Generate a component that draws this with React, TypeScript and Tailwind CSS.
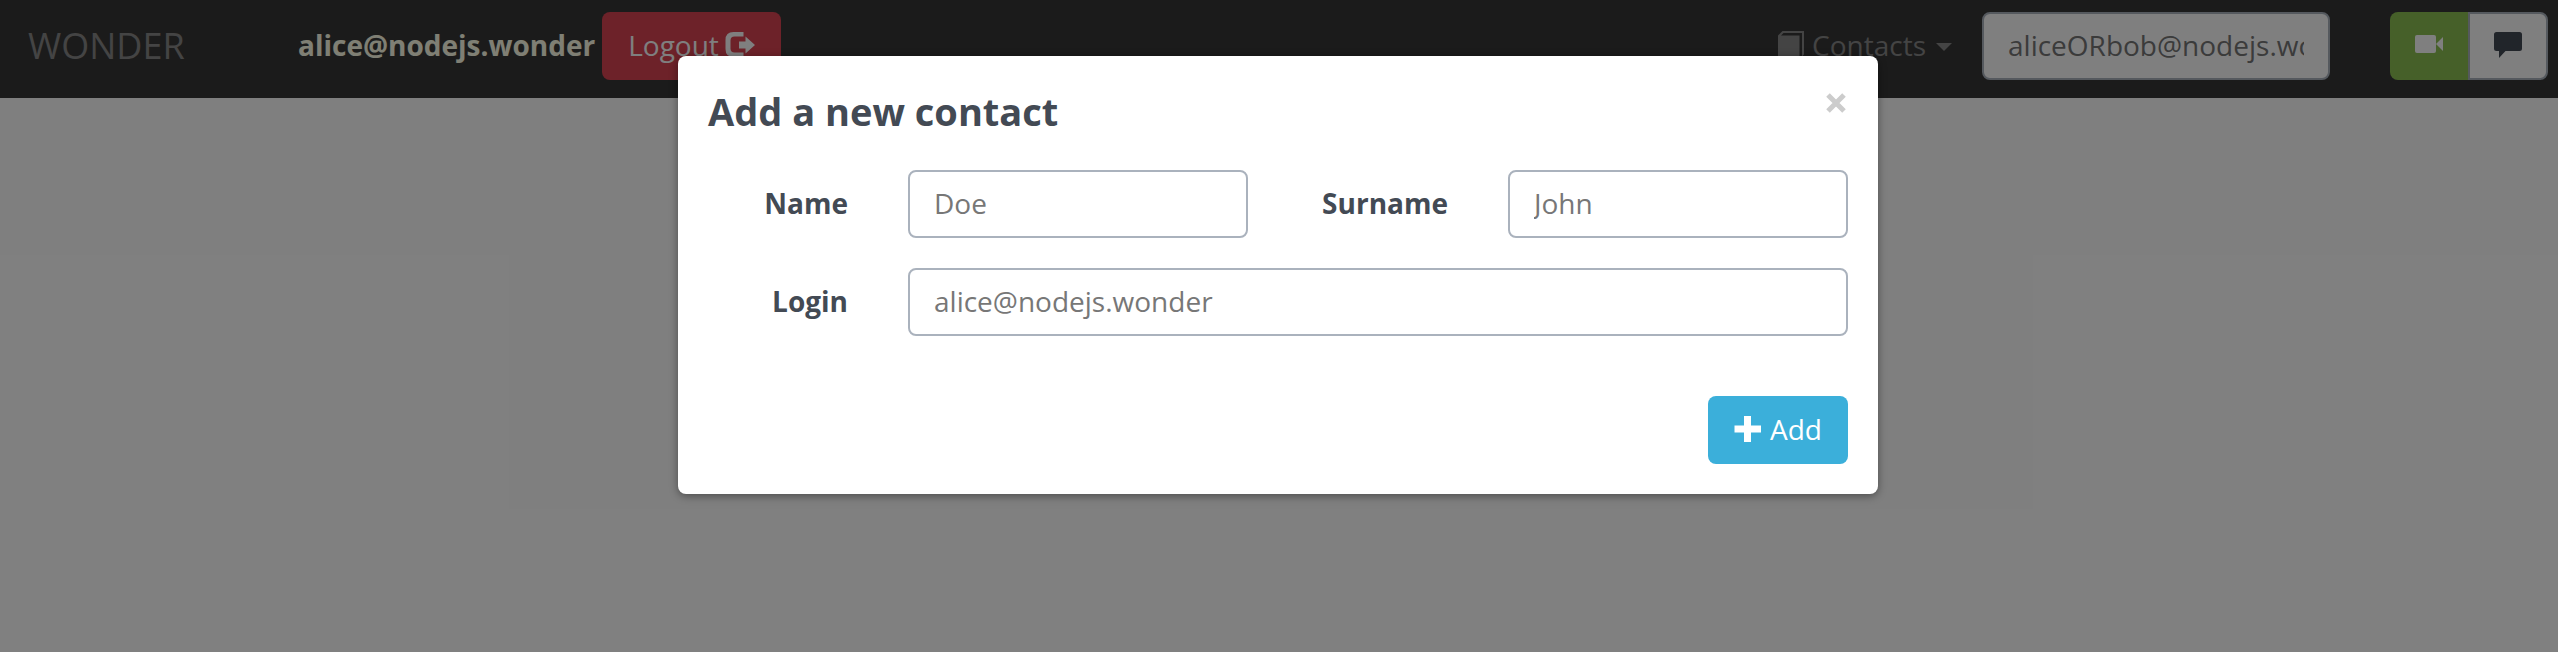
import type { ReactNode } from "react";

const field =
  "h-[68px] w-full min-w-0 rounded-lg border-2 border-[#aab2bd] bg-white px-6 pb-0.5 text-[28px] leading-10 outline-none placeholder:text-[#777777]";
const label = "w-[200px] shrink-0 px-[30px] pb-0.5 text-right font-bold";

function Icon({ children, viewBox = "0 0 28 28", className = "size-7" }: { children: ReactNode; viewBox?: string; className?: string }) {
  return (
    <svg viewBox={viewBox} className={`shrink-0 ${className}`} fill="currentColor" aria-hidden="true">
      {children}
    </svg>
  );
}

function Navbar() {
  return (
    <nav className="flex h-[98px] items-start bg-[#373737] pt-3 pr-[10px] pl-[28px]">
      <a href="#" className="flex h-[68px] w-[270px] shrink-0 items-center text-[36px] text-[#888888]">
        WONDER
      </a>
      <div className="flex flex-1 items-center gap-[7px]">
        <strong className="pb-0.5 font-bold text-[#ffffe8]">alice@nodejs.wonder</strong>
        <button type="button" className="flex h-[68px] items-center gap-1.5 rounded-lg bg-[#da4453] px-[26px] pb-0.5 text-white">
          Logout
          <Icon viewBox="0 0 30 28" className="h-7 w-[30px]">
            <path d="M18.500 1H8.500Q0.500 1 0.500 9v9q0 8 8 8h10v-4.500h-9q-4 0-4-4v-8q0-4 4-4h9z" />
            <path d="M14 10.500h6.500V5.500l9.500 8.500-9.500 8.500v-5H14z" />
          </Icon>
        </button>
      </div>
      <button type="button" className="flex h-[68px] items-center pb-0.5 text-[#888888]">
        <Icon viewBox="0 0 26 28" className="mr-2 h-7 w-[26px]">
          <path d="M0 4.500L4.500 0H26v23.500L24 25.500V2H5.500L3 4.500H21.500V28H0z" />
        </Icon>
        Contacts
        <svg viewBox="0 0 16 8" className="mt-1 ml-2.5 h-2 w-4" fill="currentColor" aria-hidden="true">
          <path d="M0 0h16L8 8z" />
        </svg>
      </button>
      <input
        aria-label="Call address"
        placeholder="aliceORbob@nodejs.wonder"
        className="mr-[60px] ml-[30px] h-[68px] w-[348px] rounded-lg border-2 border-[#aab2bd] bg-white px-6 pb-0.5 text-[28px] outline-none placeholder:text-[#777777]"
      />
      <div className="flex">
        <button type="button" aria-label="Video call" className="flex h-[68px] w-[78px] items-center justify-center rounded-l-lg bg-[#8cc152] text-white">
          <Icon>
            <rect x="0" y="3" width="21" height="18" rx="2" />
            <path d="M21 12l7-7v14z" />
          </Icon>
        </button>
        <button type="button" aria-label="Chat" className="flex h-[68px] w-20 items-center justify-center rounded-r-lg border-2 border-[#aab2bd] bg-white text-[#434a54]">
          <Icon>
            <path d="M2.500 0h23Q28 0 28 2.500v14q0 2.500-2.500 2.500H11.500L5 26V19H2.500Q0 19 0 16.500v-14Q0 0 2.500 0z" />
          </Icon>
        </button>
      </div>
    </nav>
  );
}

function ContactDialog() {
  return (
    <form
      role="dialog"
      aria-labelledby="dialog-title"
      className="w-[1200px] rounded-lg bg-white shadow-[0_2px_8px_rgba(0,0,0,0.4)]"
    >
      <header className="flex items-start justify-between px-[30px] pt-[30px] pb-[34px]">
        <h1 id="dialog-title" className="text-[38px] leading-[50px] font-bold">
          Add a new contact
        </h1>
        <button type="button" aria-label="Close" className="p-[2px] pt-[7px] text-[#cccccc]">
          <svg viewBox="0 0 20 20" className="size-5" fill="none" stroke="currentColor" strokeWidth="5" aria-hidden="true">
            <path d="M2 2l16 16M18 2L2 18" />
          </svg>
        </button>
      </header>
      <div className="flex flex-col gap-[30px] pr-[30px]">
        <div className="flex items-center">
          <label htmlFor="name" className={label}>Name</label>
          <div className="flex-1 px-[30px]">
            <input id="name" placeholder="Doe" className={field} />
          </div>
          <label htmlFor="surname" className={label}>Surname</label>
          <div className="flex-1 pl-[30px]">
            <input id="surname" placeholder="John" className={field} />
          </div>
        </div>
        <div className="flex items-center">
          <label htmlFor="login" className={label}>Login</label>
          <div className="flex-1 pl-[30px]">
            <input id="login" placeholder="alice@nodejs.wonder" className={field} />
          </div>
        </div>
      </div>
      <footer className="flex justify-end px-[30px] pt-[60px] pb-[30px]">
        <button type="submit" className="flex h-[68px] items-center gap-2 rounded-lg bg-[#3bafda] px-[26px] pb-0.5 text-white">
          <Icon>
            <path d="M10 1h7v9.500h10v7H17V27h-7v-9.500H0.500v-7H10z" />
          </Icon>
          Add
        </button>
      </footer>
    </form>
  );
}

export default function App() {
  return (
    <div className="relative min-h-screen bg-white font-['Open_Sans',sans-serif] text-[28px] leading-10 text-[#434a54]">
      <Navbar />
      <div className="absolute inset-0 flex items-start justify-center bg-black/50 pt-14 pr-0.5">
        <ContactDialog />
      </div>
    </div>
  );
}
